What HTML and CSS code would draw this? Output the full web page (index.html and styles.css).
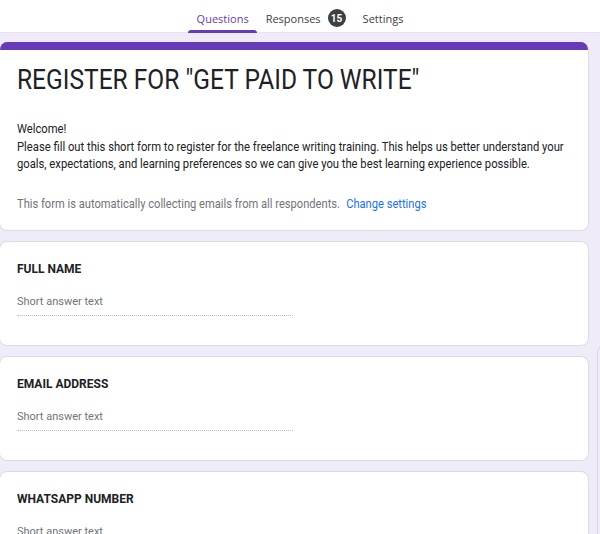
FILE: index.html
```html
<!DOCTYPE html>
<html>
<head>
<meta charset="utf-8">
<link rel="stylesheet" href="styles.css">
</head>
<body>
<header class="topbar">
  <nav class="tabs">
    <div class="tab active">Questions</div>
    <div class="tab">Responses <span class="badge">15</span></div>
    <div class="tab">Settings</div>
  </nav>
</header>
<main class="form">
  <section class="card header-card">
    <div class="band"></div>
    <div class="header-body">
      <h1 class="title">REGISTER FOR "GET PAID TO WRITE"</h1>
      <p class="desc">Welcome!<br>Please fill out this short form to register for the freelance writing training. This helps us better understand your goals, expectations, and learning preferences so we can give you the best learning experience possible.</p>
      <p class="notice">This form is automatically collecting emails from all respondents. <a class="link">Change settings</a></p>
    </div>
  </section>
  <section class="card question">
    <div class="q-title">FULL NAME</div>
    <div class="answer">Short answer text</div>
  </section>
  <section class="card question">
    <div class="q-title">EMAIL ADDRESS</div>
    <div class="answer">Short answer text</div>
  </section>
  <section class="card question">
    <div class="q-title">WHATSAPP NUMBER</div>
    <div class="answer">Short answer text</div>
  </section>
</main>
<div class="side-edge"></div>
</body>
</html>
```

FILE: styles.css
```css
html, body {
  margin: 0;
  padding: 0;
  background: #f0ebf8;
  font-family: Roboto, "Liberation Sans", Arial, sans-serif;
  color: #202124;
  overflow: hidden;
  height: 534px;
}
.topbar {
  background: #ffffff;
  height: 33px;
  border-bottom: 1px solid #e6e1ef;
  box-sizing: border-box;
}
.tabs {
  display: flex;
  justify-content: center;
  height: 33px;
  padding-left: 0;
}
.tab {
  display: flex;
  align-items: center;
  padding: 3px 8.5px 0 8.5px;
  font-family: "Open Sans", Roboto, sans-serif;
  font-size: 11px;
  font-weight: 500;
  color: #3c4043;
  height: 33px;
  box-sizing: border-box;
  position: relative;
}
.tab.active {
  color: #673ab7;
}
.tab.active::after {
  content: "";
  position: absolute;
  left: 0;
  right: 0;
  bottom: 0;
  height: 3px;
  background: #673ab7;
  border-radius: 3px 3px 0 0;
}
.badge {
  display: inline-flex;
  align-items: center;
  justify-content: center;
  width: 18px;
  height: 18px;
  border-radius: 50%;
  background: #3c4043;
  color: #fff;
  font-family: Roboto, sans-serif;
  font-size: 10px;
  font-weight: 700;
  margin-left: 7px;
}
.form {
  display: flex;
  flex-direction: column;
  gap: 10px;
  padding-top: 9px;
  margin-left: -1px;
  width: 590px;
}
.card {
  background: #fff;
  border: 1px solid #dadce0;
  border-radius: 8px;
  overflow: hidden;
}
.header-card {
  border-top: none;
}
.band {
  height: 8px;
  background: #673ab7;
}
.header-body {
  padding: 12px 18px 18px 17px;
}
.title {
  margin: 0;
  font-size: 28px;
  font-weight: 400;
  line-height: 36px;
  color: #202124;
  white-space: nowrap;
  transform: scaleX(0.876);
  transform-origin: 0 0;
}
.desc {
  margin: 22px 0 0 0;
  width: 640px;
  font-size: 13px;
  line-height: 17.5px;
  color: #202124;
  transform: scaleX(0.864);
  transform-origin: 0 0;
}
.notice {
  margin: 22px 0 0 0;
  width: 640px;
  font-size: 13px;
  line-height: 17.5px;
  color: #70757a;
  transform: scaleX(0.856);
  transform-origin: 0 0;
}
.link {
  color: #1a73e8;
  margin-left: 4px;
}
.question {
  padding: 19px 18px 29px 17px;
}
.q-title {
  font-size: 12px;
  line-height: 16px;
  font-weight: 700;
  color: #202124;
}
.answer {
  margin-top: 17px;
  width: 276px;
  font-size: 11px;
  line-height: 16px;
  color: #70757a;
  padding-bottom: 5px;
  border-bottom: 1px dotted #bdbdbd;
}
.side-edge {
  position: absolute;
  left: 597px;
  top: 346px;
  width: 10px;
  height: 200px;
  border-left: 1px solid #dcd7e6;
  border-top: 1px solid #dcd7e6;
  border-top-left-radius: 6px;
}
```
